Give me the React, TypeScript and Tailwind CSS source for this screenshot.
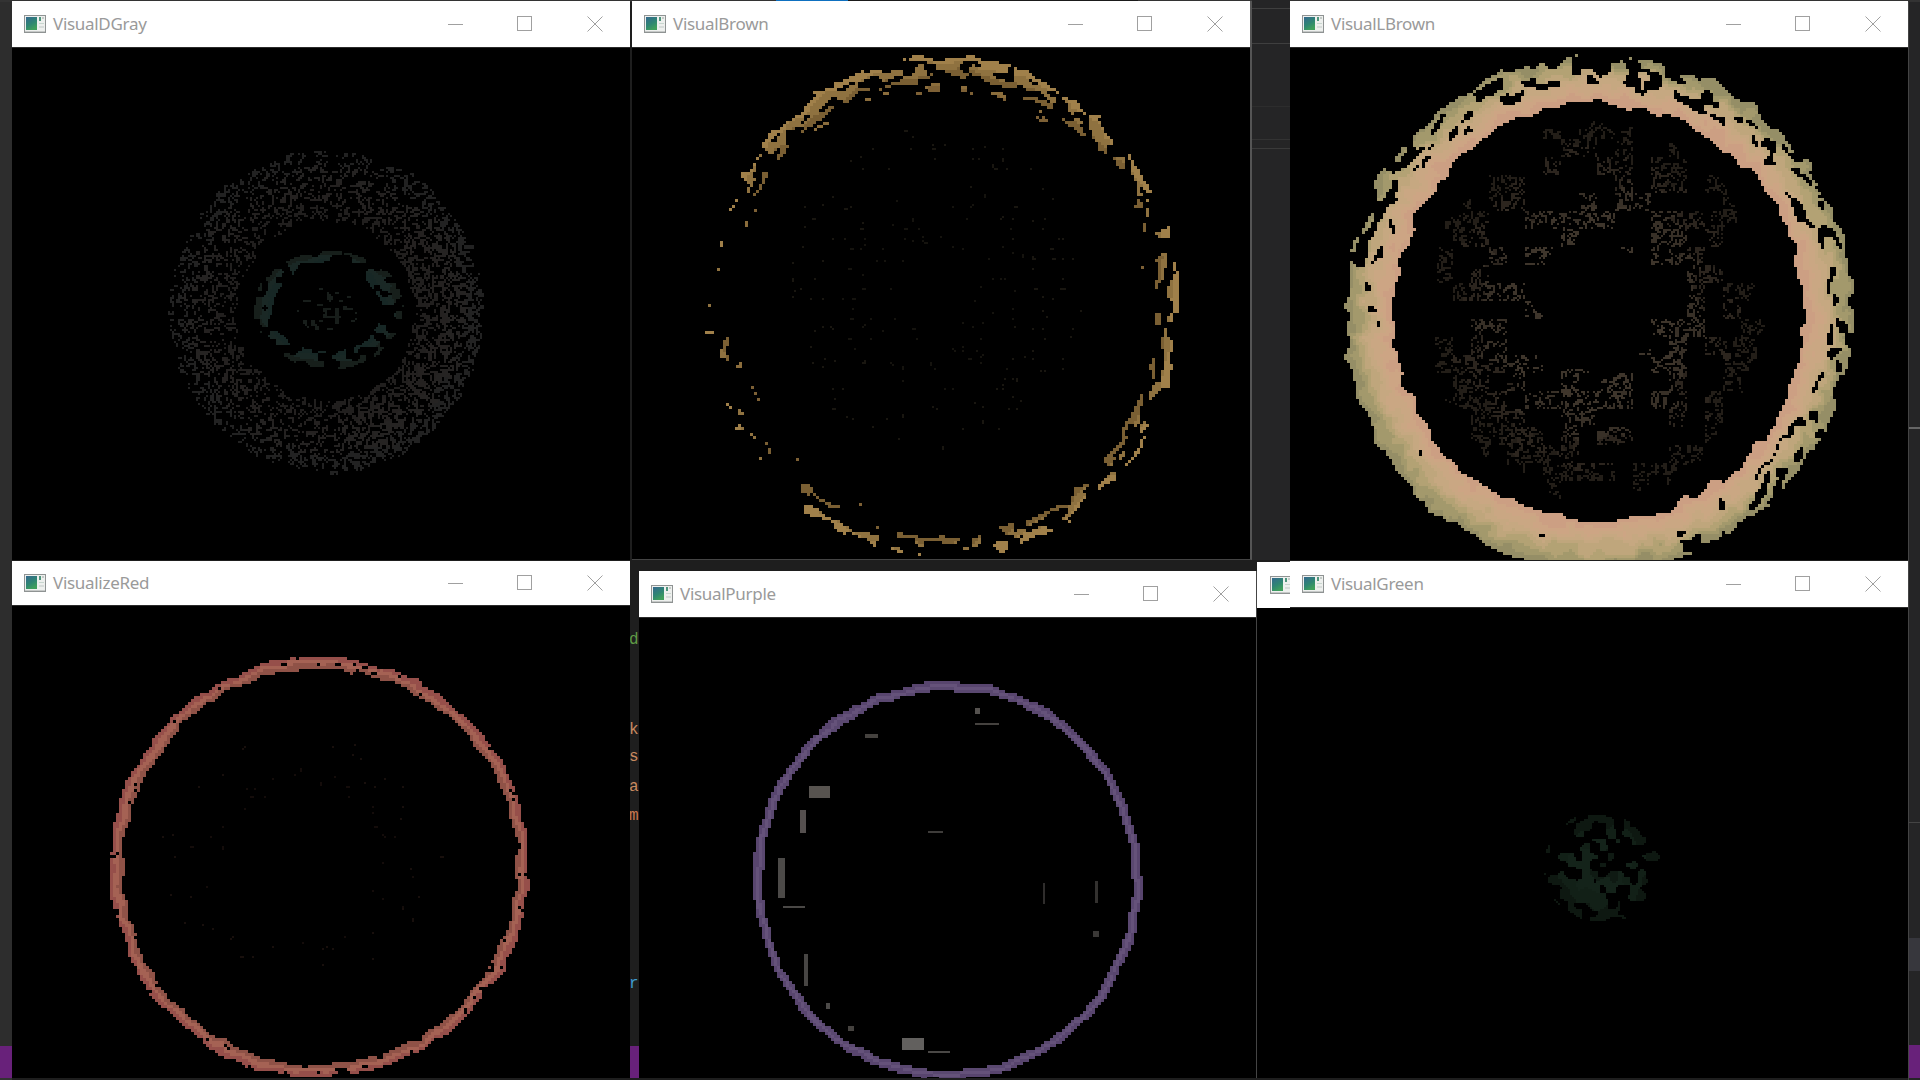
import type { ReactNode } from 'react';

type Ring = {
  cx: number;
  cy: number;
  rx: number;
  ry: number;
  thickness: number;
  cell: number;
  noise: number;
  jitter: number;
  colors: string[];
  density: (deg: number) => number;
  block?: number;
  blockDensity?: number;
  polar?: boolean;
  solid?: number;
  seed: number;
};

function hash(x: number, y: number, seed: number) {
  const v = Math.sin(x * 127.1 + y * 311.7 + seed * 74.7) * 43758.5453;
  return v - Math.floor(v);
}

function smoothNoise(x: number, y: number, seed: number) {
  const ix = Math.floor(x);
  const iy = Math.floor(y);
  const fx = x - ix;
  const fy = y - iy;
  const ux = fx * fx * (3 - 2 * fx);
  const uy = fy * fy * (3 - 2 * fy);
  const a = hash(ix, iy, seed);
  const b = hash(ix + 1, iy, seed);
  const c = hash(ix, iy + 1, seed);
  const d = hash(ix + 1, iy + 1, seed);
  return a + (b - a) * ux + (c - a) * uy + (a - b - c + d) * ux * uy;
}

function ringPaths(r: Ring) {
  const paths: string[] = r.colors.map(() => '');
  const inner = Math.max(0, 1 - r.thickness / r.rx);
  const { cell } = r;
  for (let gy = r.cy - r.ry - 8; gy < r.cy + r.ry + 8; gy += cell) {
    for (let gx = r.cx - r.rx - 8; gx < r.cx + r.rx + 8; gx += cell) {
      const dx = (gx - r.cx) / r.rx;
      const dy = (gy - r.cy) / r.ry;
      const angle = Math.atan2(dy, dx);
      const deg = (angle * 180) / Math.PI;
      const wobble = (smoothNoise(gx / 14, gy / 14, r.seed + 3) - 0.5) * r.jitter;
      const d = Math.sqrt(dx * dx + dy * dy) + wobble;
      if (d > 1 || d < inner) continue;
      const t = (d - inner) / (1 - inner);
      const n = r.polar
        ? smoothNoise((angle * r.rx) / r.noise, (d * r.rx) / (r.noise * 0.4), r.seed)
        : smoothNoise(gx / r.noise, gy / r.noise, r.seed);
      if (t >= (r.solid ?? 0) && n > r.density(deg)) continue;
      if (r.block) {
        const on = hash(Math.floor(gx / r.block), Math.floor(gy / r.block), r.seed + 9);
        if (on > (r.blockDensity ?? 1)) continue;
      }
      const tinted = t + (smoothNoise(gx / 9, gy / 9, r.seed + 5) - 0.5) * 0.25;
      const i = Math.max(0, Math.min(r.colors.length - 1, Math.floor(tinted * r.colors.length)));
      paths[i] += `M${gx} ${gy}h${cell}v${cell}h-${cell}z`;
    }
  }
  return paths;
}

function Rings({ rings, children }: { rings: Ring[]; children?: ReactNode }) {
  return (
    <svg className="block h-full w-full blur-[0.6px]">
      {rings.map((r, i) =>
        ringPaths(r).map((d, j) => <path key={`${i}-${j}`} d={d} fill={r.colors[j]} />),
      )}
      {children}
    </svg>
  );
}

function WindowIcon() {
  return (
    <svg width="22" height="18" viewBox="0 0 22 18" className="shrink-0 blur-[0.3px]">
      <defs>
        <linearGradient id="icon-fill" x1="0" y1="0" x2="0.5" y2="1">
          <stop offset="0" stopColor="#35688f" />
          <stop offset="0.6" stopColor="#2f8672" />
          <stop offset="1" stopColor="#3f9f5c" />
        </linearGradient>
      </defs>
      <rect x="0" y="0" width="22" height="18" fill="#8f9393" />
      <rect x="1" y="1" width="20" height="15" fill="#eef0ee" />
      <rect x="2" y="2" width="11" height="13" fill="url(#icon-fill)" />
      <rect x="15" y="2" width="2" height="4" fill="#4f957c" />
      <rect x="18" y="2" width="2" height="2" fill="#c3cac7" />
      <rect x="15" y="8" width="5" height="1" fill="#c8d6cf" />
      <rect x="15" y="11" width="5" height="2" fill="#d7dcda" />
      <rect x="1" y="16" width="20" height="1" fill="#c6c9c8" />
    </svg>
  );
}

function TitleBar({ title, className }: { title: string; className: string }) {
  return (
    <div className={`flex shrink-0 items-center bg-white pl-3 ${className}`}>
      <WindowIcon />
      <span className="ml-[7px] flex-1 font-['Noto_Sans',sans-serif] text-[17px] tracking-[-0.3px] text-[#9a9a9a]">
        {title}
      </span>
      <div className="flex h-full w-[70px] items-center justify-center pl-[2px]">
        <svg width="16" height="16" viewBox="0 0 16 16">
          <path d="M0 8.5h15" stroke="#a0a0a0" fill="none" />
        </svg>
      </div>
      <div className="flex h-full w-[70px] items-center justify-center">
        <svg width="16" height="16" viewBox="0 0 16 16">
          <rect x="0.5" y="0.5" width="14" height="14" stroke="#a0a0a0" fill="none" />
        </svg>
      </div>
      <div className="flex h-full w-[70px] items-center justify-center">
        <svg width="16" height="16" viewBox="0 0 16 16">
          <path d="M0.5 0.5l15 15M15.5 0.5l-15 15" stroke="#a0a0a0" fill="none" />
        </svg>
      </div>
    </div>
  );
}

function Win({
  title,
  className,
  barClass = 'h-[46px]',
  children,
}: {
  title: string;
  className: string;
  barClass?: string;
  children?: ReactNode;
}) {
  return (
    <div className={`absolute flex flex-col bg-black ${className}`}>
      <TitleBar title={title} className={barClass} />
      <div className="min-h-0 flex-1 overflow-hidden border-t border-[#2a2a2a]">{children}</div>
    </div>
  );
}

const dgray: Ring[] = [
  {
    cx: 313, cy: 262, rx: 157, ry: 161, thickness: 68, cell: 2, noise: 2.2, jitter: 0.05,
    colors: ['#211f1e', '#242120', '#252322', '#222222'],
    density: (a) => (a > -40 && a < 80 ? 0.5 : 0.38),
    seed: 11,
  },
  {
    cx: 315, cy: 261, rx: 75, ry: 58, thickness: 20, cell: 2, noise: 7, jitter: 0.08,
    colors: ['#172725', '#1a2825', '#171f1b'],
    density: () => 0.5,
    seed: 12,
  },
  {
    cx: 315, cy: 262, rx: 30, ry: 24, thickness: 30, cell: 2, noise: 4, jitter: 0.1,
    colors: ['#171d1a', '#181e1b'],
    density: () => 0.26,
    seed: 13,
  },
];

const brown: Ring[] = [
  {
    cx: 309, cy: 258, rx: 237, ry: 252, thickness: 22, cell: 3, noise: 12, jitter: 0.03,
    colors: ['#7a5f33', '#8f7240', '#a0804a'],
    density: (a) => {
      if (a > -140 && a < -70) return 0.56;
      if (a >= -70 && a < -20) return 0.42;
      if (a >= -20 && a < 35) return 0.4;
      if (a >= 35 && a < 130) return 0.4;
      return 0.15;
    },
    polar: true,
    seed: 21,
  },
  {
    cx: 309, cy: 258, rx: 212, ry: 224, thickness: 8, cell: 3, noise: 10, jitter: 0.02,
    colors: ['#7d6035', '#8b6d3c'],
    density: (a) => (a < -60 && a > -130 ? 0.34 : 0.08),
    polar: true,
    seed: 22,
  },
  {
    cx: 300, cy: 240, rx: 150, ry: 160, thickness: 110, cell: 2, noise: 2.5, jitter: 0.03,
    colors: ['#15130e', '#191610'],
    density: () => 0.08,
    seed: 23,
  },
];

const lbrown: Ring[] = [
  {
    cx: 307, cy: 263, rx: 254, ry: 258, thickness: 49, cell: 3, noise: 14, jitter: 0.04,
    colors: ['#cc9f83', '#cda584', '#caa783', '#c6a881', '#bfa67c', '#b3a274', '#a3996c', '#958e66'],
    density: (a) => {
      if (a > 70 && a < 205) return 0.95;
      return 0.66;
    },
    polar: true,
    solid: 0.36,
    seed: 31,
  },
  {
    cx: 304, cy: 260, rx: 165, ry: 185, thickness: 105, cell: 2, noise: 2.2, jitter: 0.1,
    colors: ['#3e352b', '#383027', '#2c251e', '#231e18'],
    density: () => 0.42,
    block: 18,
    blockDensity: 0.5,
    seed: 32,
  },
];

const red: Ring[] = [
  {
    cx: 306, cy: 260, rx: 209, ry: 210, thickness: 12, cell: 3, noise: 7, jitter: 0.028,
    colors: ['#8f5247', '#a56254', '#964f4a'],
    density: () => 0.86,
    polar: true,
    seed: 41,
  },
  {
    cx: 290, cy: 250, rx: 150, ry: 120, thickness: 70, cell: 2, noise: 2.5, jitter: 0.02,
    colors: ['#140c0a', '#180f0c'],
    density: () => 0.07,
    seed: 42,
  },
];

const purple: Ring[] = [
  {
    cx: 307, cy: 261, rx: 194, ry: 199, thickness: 9, cell: 3, noise: 8, jitter: 0.018,
    colors: ['#5a4870', '#65527a', '#58456e'],
    density: () => 0.96,
    seed: 51,
  },
];

const purpleBits: [number, number, number, number, string][] = [
  [170, 168, 21, 12, '#57534f'],
  [161, 192, 6, 23, '#55504f'],
  [139, 240, 7, 40, '#4c4a48'],
  [144, 288, 22, 2, '#4a4846'],
  [165, 336, 4, 32, '#474543'],
  [263, 420, 22, 12, '#62605e'],
  [289, 433, 22, 2, '#4a4846'],
  [336, 90, 5, 6, '#55524f'],
  [336, 105, 24, 2, '#45423f'],
  [226, 116, 13, 4, '#45423f'],
  [404, 265, 2, 21, '#2f2d2c'],
  [456, 263, 3, 22, '#33312f'],
  [454, 313, 6, 6, '#3a3836'],
  [187, 385, 4, 6, '#4c4a48'],
  [209, 408, 6, 5, '#45423f'],
  [289, 213, 15, 2, '#3e3c3a'],
];

const green: Ring[] = [
  {
    cx: 310, cy: 259, rx: 60, ry: 52, thickness: 60, cell: 2, noise: 8, jitter: 0.12,
    colors: ['#0f1a13', '#14231a', '#122017', '#0e1811'],
    density: (a) => (a > 30 && a < 150 ? 0.55 : 0.42),
    seed: 61,
  },
];

const codeBits = [
  { text: 'da', className: 'top-[630px] text-[#5f9a45]' },
  { text: 'kl', className: 'top-[720px] text-[#c98a60]' },
  { text: 'sl', className: 'top-[747px] text-[#c98a60]' },
  { text: 'as', className: 'top-[777px] text-[#c98a60]' },
  { text: 'ma', className: 'top-[806px] text-[#c9784f]' },
  { text: 'r', className: 'top-[974px] text-[#3f9ccf]' },
];

export default function App() {
  return (
    <div className="relative flex h-[1080px] w-[1920px] overflow-hidden bg-[#1e1e1e]">
      <div className="flex w-[12px] flex-col bg-[#2d2d2d]">
        <div className="flex-1" />
        <div className="h-[32px] bg-[#68217a]" />
        <div className="h-[2px] bg-[#333333]" />
      </div>
      <div className="flex-1" />
      <div className="flex w-[12px] flex-col border-l border-[#444444] bg-[#252526]">
        <div className="h-[427px]" />
        <div className="h-[2px] bg-[#666666]" />
        <div className="h-[393px]" />
        <div className="h-px bg-[#444444]" />
        <div className="h-[115px]" />
        <div className="h-[33px] bg-[#37373d]" />
        <div className="h-[74px]" />
        <div className="h-[33px] bg-[#68217a]" />
      </div>

      {/* editor behind the windows */}
      <div className="absolute left-[0px] top-[0px] h-[2px] w-[1920px] bg-[#333333]" />
      <div className="absolute left-[776px] top-[0px] h-[2px] w-[72px] bg-[#0e70c0]" />
      <div className="absolute left-[848px] top-[0px] h-[2px] w-[290px] bg-[#1a1a1a]" />
      <div className="absolute left-[1252px] top-[0px] h-[560px] w-[38px] bg-[#252526]">
        <div className="mt-[8px] h-px bg-[#3f3f3f]" />
        <div className="mt-[34px] h-px bg-[#3f3f3f]" />
        <div className="mt-[62px] h-px bg-[#2d2d2d]" />
        <div className="mt-[32px] h-px bg-[#333333]" />
        <div className="mt-[8px] h-px bg-[#3a3a3a]" />
      </div>
      <div className="absolute left-[630px] top-[561px] h-[517px] w-[9px] bg-[#1e1e1e]">
        <div className="absolute bottom-0 left-0 h-[32px] w-full bg-[#68217a]" />
      </div>
      {codeBits.map((c) => (
        <div
          key={c.text}
          className={`absolute left-[629px] font-['Liberation_Mono',monospace] text-[16px] leading-[20px] ${c.className}`}
        >
          {c.text}
        </div>
      ))}

      <Win title="VisualDGray" className="left-[12px] top-[1px] h-[559px] w-[618px]">
        <Rings rings={dgray} />
      </Win>
      <Win title="VisualBrown" className="left-[632px] top-[1px] h-[559px] w-[620px] border-r-2 border-b border-r-[#555555] border-b-[#444444]">
        <Rings rings={brown} />
      </Win>
      <Win title="VisualLBrown" className="left-[1290px] top-[1px] h-[559px] w-[618px]">
        <Rings rings={lbrown} />
      </Win>
      <Win title="VisualizeRed" className="left-[12px] top-[561px] h-[517px] w-[618px]" barClass="h-[44px]">
        <Rings rings={red} />
      </Win>

      {/* window mostly hidden under VisualPurple and VisualGreen */}
      <div className="absolute left-[1257px] top-[562px] flex h-[516px] w-[33px] flex-col bg-black">
        <div className="flex h-[46px] items-center overflow-hidden bg-white pl-[13px]">
          <WindowIcon />
        </div>
      </div>

      <Win title="VisualPurple" className="left-[639px] top-[571px] h-[507px] w-[618px] border-r border-r-[#444444]">
        <Rings rings={purple}>
          {purpleBits.map(([x, y, w, h, fill]) => (
            <rect key={`${x}-${y}`} x={x} y={y} width={w} height={h} fill={fill} />
          ))}
        </Rings>
      </Win>
      <Win title="VisualGreen" className="left-[1290px] top-[561px] h-[517px] w-[618px]">
        <Rings rings={green} />
      </Win>
    </div>
  );
}
